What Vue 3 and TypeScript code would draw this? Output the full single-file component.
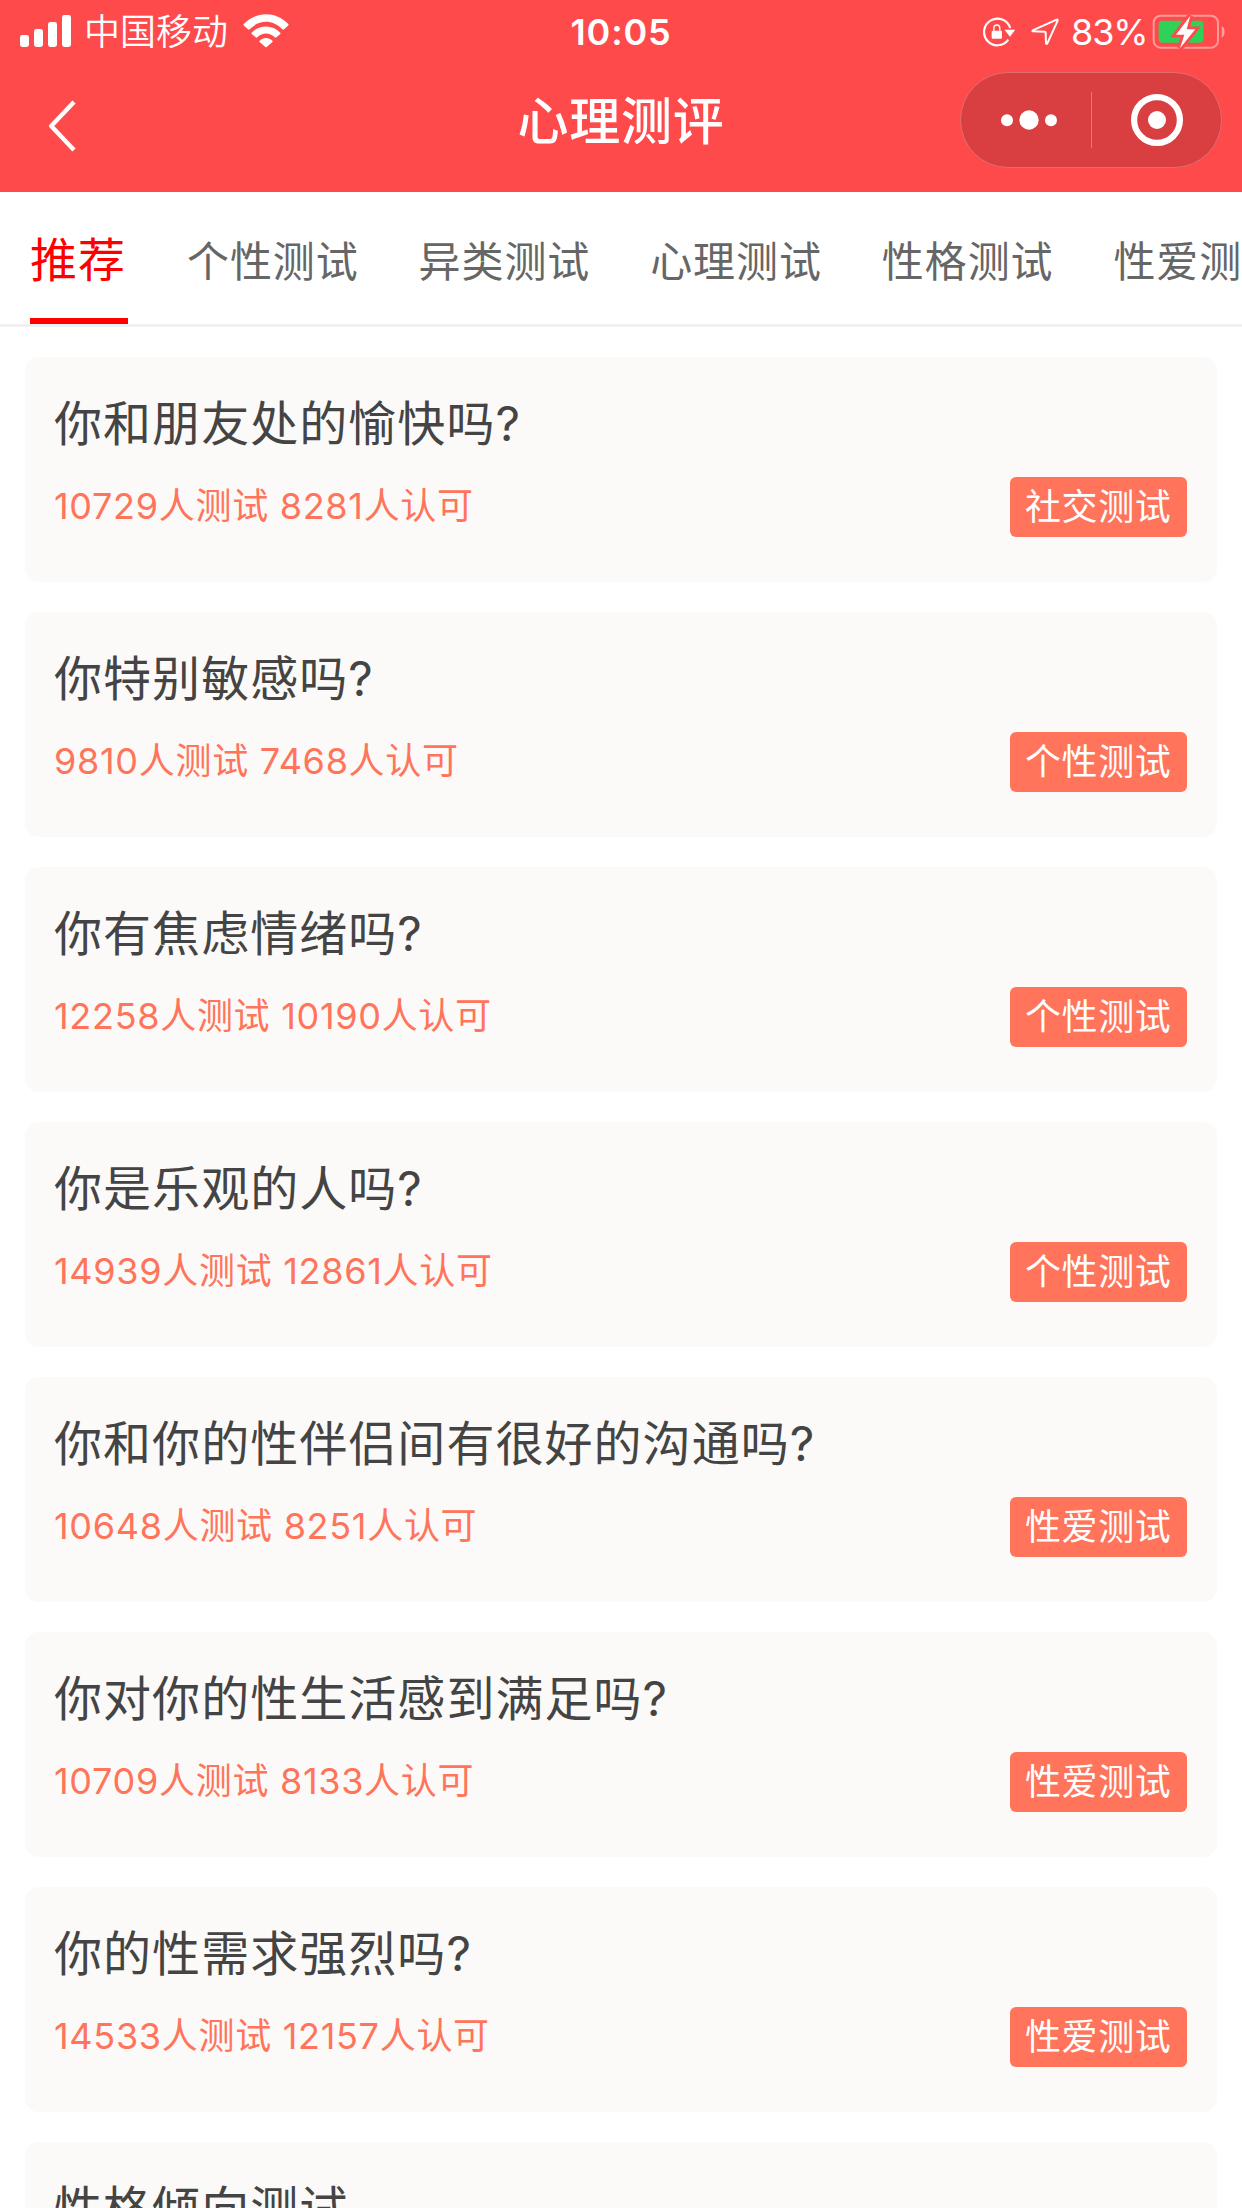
<script setup lang="ts">
interface Quiz {
  title: string
  tested: number
  liked: number
  tag: string
}

const tabs: string[] = ['推荐', '个性测试', '异类测试', '心理测试', '性格测试', '性爱测试']

const quizzes: Quiz[] = [
  { title: '你和朋友处的愉快吗?', tested: 10729, liked: 8281, tag: '社交测试' },
  { title: '你特别敏感吗?', tested: 9810, liked: 7468, tag: '个性测试' },
  { title: '你有焦虑情绪吗?', tested: 12258, liked: 10190, tag: '个性测试' },
  { title: '你是乐观的人吗?', tested: 14939, liked: 12861, tag: '个性测试' },
  { title: '你和你的性伴侣间有很好的沟通吗?', tested: 10648, liked: 8251, tag: '性爱测试' },
  { title: '你对你的性生活感到满足吗?', tested: 10709, liked: 8133, tag: '性爱测试' },
  { title: '你的性需求强烈吗?', tested: 14533, liked: 12157, tag: '性爱测试' },
  { title: '性格倾向测试', tested: 11326, liked: 9204, tag: '性格测试' },
]
</script>

<template>
  <div class="screen">
    <header class="header">
      <div class="status">
        <div class="status-left">
          <svg class="signal" width="51" height="32" viewBox="0 0 51 32" fill="#fff">
            <rect x="0" y="20" width="9" height="12" rx="2.4" />
            <rect x="14" y="14" width="9" height="18" rx="2.4" />
            <rect x="28" y="7" width="9" height="25" rx="2.4" />
            <rect x="42" y="0" width="9" height="32" rx="2.4" />
          </svg>
          <span class="carrier">中国移动</span>
          <svg class="wifi" width="46" height="34" viewBox="0 0 138 102" fill="#fff">
            <path d="M2 30 Q0 32 3 35 L15 46 Q17 48 20 46 C48 16 90 16 118 46 Q121 48 123 46 L135 35 Q138 32 136 30 C98 -9 40 -9 2 30 Z" />
            <path d="M26 56 Q24 58 27 61 L38 70 Q40 72 43 70 C58 55 80 55 95 70 Q98 72 100 70 L111 61 Q114 58 112 56 C88 31 50 31 26 56 Z" />
            <path d="M50 80 Q47 82 50 84 L67 99 Q69 101 71 99 L88 84 Q91 82 88 80 C77 69 61 69 50 80 Z" />
          </svg>
        </div>
        <span class="clock">10:05</span>
        <div class="status-right">
          <svg class="lock" width="34" height="30" viewBox="0 0 102 90">
            <path d="M84.500 33 A40 40 0 1 0 79 68" fill="none" stroke="#fff" stroke-width="6.500" />
            <path d="M69 39 H98 L84 58 Z" fill="#fff" stroke="#fff" stroke-width="2" stroke-linejoin="round" />
            <rect x="29" y="41" width="31" height="24" rx="3" fill="#fff" />
            <path d="M35.500 42 V34 A9 10 0 0 1 53.500 34 V42" fill="none" stroke="#fff" stroke-width="4" />
          </svg>
          <svg class="arrow" width="28" height="28" viewBox="0 0 84 84">
            <path d="M77 5 L5 37 Q3 39 6 40 L41 41 Q44 41 44 44 L45 76 Q46 80 49 76 L80 8 Q81 3 77 5 Z" fill="none" stroke="#fff" stroke-width="6" stroke-linejoin="round" />
          </svg>
          <span class="percent">83%</span>
          <svg class="battery" width="74" height="36" viewBox="0 0 222 108">
            <rect x="5" y="5" width="193" height="96" rx="21" fill="none" stroke="#ff9a9b" stroke-width="6" />
            <path d="M209 36 C221 42 221 64 209 72 Z" fill="#ff9a9b" />
            <rect x="20" y="20" width="134" height="66" rx="11" fill="#30d158" />
            <path d="M115 5 L72 62 H97 L84 103 L130 46 H104 Z" fill="#ff4a4b" stroke="#ff4a4b" stroke-width="17" />
            <path d="M115 5 L72 62 H97 L84 103 L130 46 H104 Z" fill="#fff" />
          </svg>
        </div>
      </div>
      <div class="nav">
        <svg class="back" width="32" height="54" viewBox="0 0 32 54">
          <path d="M28 3 L5.200 27 L28 51" fill="none" stroke="#fff" stroke-width="4.400" stroke-linejoin="round" />
        </svg>
        <h1 class="page-title">心理测评</h1>
        <div class="capsule">
          <svg class="dots" width="56" height="20" viewBox="0 0 56 20" fill="#fff">
            <circle cx="6" cy="10.300" r="6" />
            <circle cx="28" cy="10" r="9.700" />
            <circle cx="50" cy="10.300" r="6" />
          </svg>
          <i class="divider"></i>
          <svg class="target" width="52" height="52" viewBox="0 0 52 52">
            <circle cx="26" cy="26" r="22.900" fill="none" stroke="#fff" stroke-width="6.200" />
            <circle cx="26" cy="26" r="9" fill="#fff" />
          </svg>
        </div>
      </div>
    </header>

    <nav class="tabs">
      <a v-for="(tab, i) in tabs" :key="tab" class="tab" :class="{ active: i === 0 }">{{ tab }}</a>
    </nav>

    <main class="list">
      <article v-for="quiz in quizzes" :key="quiz.title" class="card">
        <h2 class="card-title">{{ quiz.title }}</h2>
        <div class="meta">
          <span class="stats">{{ quiz.tested }}人测试 {{ quiz.liked }}人认可</span>
          <span class="tag">{{ quiz.tag }}</span>
        </div>
      </article>
    </main>
  </div>
</template>

<style>
body {
  background: #fff;
}
</style>

<style scoped>
.screen {
  width: 1242px;
  height: 2208px;
  overflow: hidden;
  background: #fff;
  font-family: Inter, "Noto Sans CJK SC", sans-serif;
}
.header {
  height: 192px;
  background: #ff4a4b;
  color: #fff;
}
.status {
  display: grid;
  grid-template-columns: 1fr auto 1fr;
  align-items: center;
  height: 62px;
}
.status-left,
.status-right {
  display: flex;
  align-items: center;
}
.status-left {
  padding-left: 20px;
}
.status-right {
  justify-content: flex-end;
  padding-right: 16px;
}
.signal {
  margin: -2px 13px 0 0;
}
.carrier {
  width: 144px;
  margin-right: 15px;
  font-size: 36px;
  line-height: 64px;
  white-space: nowrap;
  font-weight: 350;
}
.wifi {
  margin-top: -3px;
}
.clock {
  font-size: 36px;
  font-weight: 600;
  line-height: 62px;
  letter-spacing: 0.8px;
}
.lock {
  margin-right: 15px;
}
.arrow {
  margin-right: 12px;
}
.percent {
  width: 81px;
  font-size: 36px;
  line-height: 62px;
  letter-spacing: -1.1px;
  white-space: nowrap;
}
.battery {
  margin-top: -1px;
}
.nav {
  display: grid;
  grid-template-columns: 1fr auto 1fr;
  align-items: center;
  height: 116px;
}
.back {
  margin: 12px 0 0 46px;
}
.page-title {
  margin: 4px 0 0;
  font-size: 51px;
  font-weight: 500;
  line-height: 76px;
  letter-spacing: 0.7px;
}
.capsule {
  box-sizing: border-box;
  display: flex;
  align-items: center;
  justify-self: end;
  width: 262px;
  height: 96px;
  margin-right: 20px;
  padding-left: 40px;
  border: 1px solid #e36d6e;
  border-radius: 48px;
  background: #d93e40;
}
.divider {
  width: 1px;
  height: 56px;
  margin: 0 39px 0 34px;
  background: #e67778;
}
.tabs {
  box-sizing: border-box;
  display: flex;
  gap: 60px;
  height: 135px;
  padding-left: 30px;
  border-bottom: 3px solid #f1f1f1;
  overflow: hidden;
}
.tab {
  flex: none;
  box-sizing: border-box;
  height: 132px;
  font-size: 42px;
  line-height: 140px;
  letter-spacing: 0.9px;
  color: #666;
  white-space: nowrap;
}
.tab:not(.active) {
  margin-left: -1px;
  margin-right: 1px;
}
.tab.active {
  width: 98px;
  border-bottom: 6px solid #f00;
  font-size: 47px;
  line-height: 135px;
  letter-spacing: 1px;
  color: #f00;
}
.list {
  display: flex;
  flex-direction: column;
  gap: 30px;
  padding: 30px 25px 0;
}
.card {
  flex: none;
  box-sizing: border-box;
  height: 225px;
  padding: 31px 30px 0 29px;
  border-radius: 14px;
  background: #fbfaf8;
}
.card-title {
  margin: 0;
  font-size: 48px;
  font-weight: 400;
  line-height: 72px;
  letter-spacing: 1.05px;
  color: #444;
}
.meta {
  display: flex;
  align-items: center;
  justify-content: space-between;
  height: 60px;
  margin-top: 17px;
}
.stats {
  height: 60px;
  font-size: 36px;
  line-height: 58px;
  letter-spacing: 0.7px;
  color: #ff745a;
}
.tag {
  box-sizing: border-box;
  width: 177px;
  height: 60px;
  padding-left: 15px;
  border-radius: 6px;
  background: #ff745a;
  font-size: 36px;
  line-height: 60px;
  letter-spacing: 0.6px;
  color: #fff;
  white-space: nowrap;
}
</style>
